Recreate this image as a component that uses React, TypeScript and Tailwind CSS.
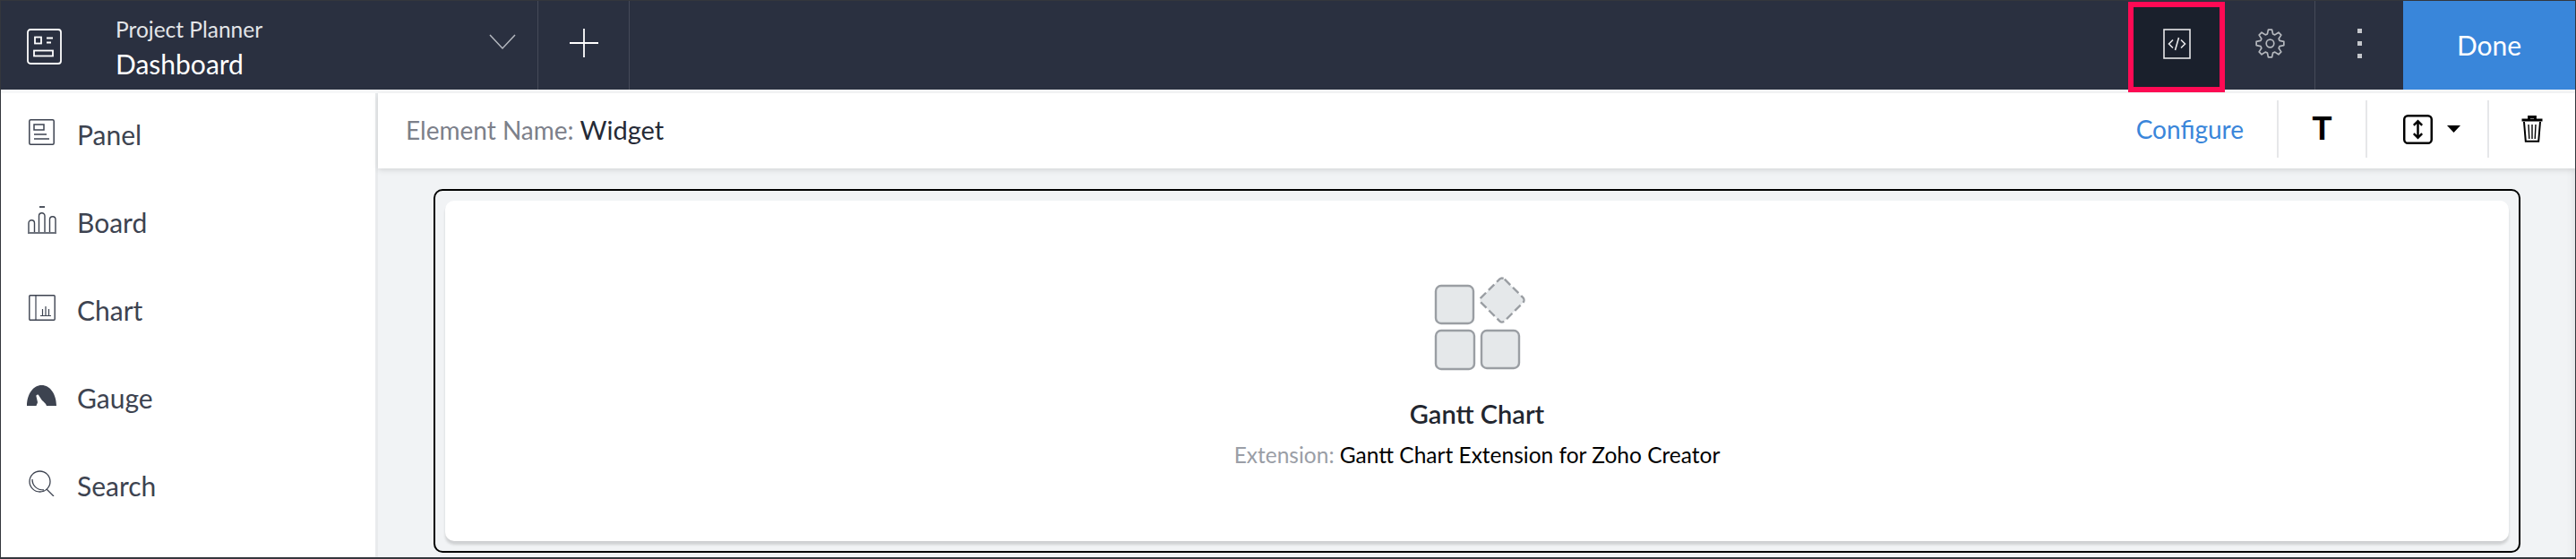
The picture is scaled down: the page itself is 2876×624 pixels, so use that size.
import React from "react";

const font = { fontFamily: '"Lato", "Open Sans", sans-serif' };

function gearPath(cx: number, cy: number, outer: number, inner: number, teeth: number) {
  const pts: string[] = [];
  const step = (Math.PI * 2) / teeth;
  for (let i = 0; i < teeth; i++) {
    const a = i * step - Math.PI / 2;
    const seq: [number, number][] = [
      [inner, a - step * 0.36],
      [outer, a - step * 0.17],
      [outer, a + step * 0.17],
      [inner, a + step * 0.36],
    ];
    seq.forEach(([r, t]) => pts.push(`${(cx + r * Math.cos(t)).toFixed(2)} ${(cy + r * Math.sin(t)).toFixed(2)}`));
  }
  return "M" + pts.join("L") + "Z";
}

function Gear() {
  return (
    <svg width="33" height="33" viewBox="0 0 33 33" fill="none" stroke="#b4b7bd" strokeWidth="1.7" strokeLinejoin="round">
      <circle cx="16.5" cy="16.5" r="4.3" />
      <path d={gearPath(16.5, 16.5, 15.5, 11, 8)} />
    </svg>
  );
}

const items: [string, React.ReactNode][] = [
  ["Panel", (
    <svg width="29" height="29" viewBox="0 0 29 29" fill="none" stroke="#3d4350" strokeWidth="1.5">
      <rect x="0.8" y="0.8" width="27.400" height="27.400" rx="1.500" />
      <rect x="6" y="6" width="11" height="6" />
      <path d="M6 17h14M6 22h17" />
    </svg>
  )],
  ["Board", (
    <svg width="32" height="31" viewBox="0 0 32 31" fill="none" stroke="#3d4350" strokeWidth="1.4">
      <path d="M13 1h6" strokeWidth="1.800" />
      <path d="M1 29V19a3 3 0 0 1 6.500 0v10M12.500 29V11a3.200 3.200 0 0 1 6.500 0v18M24.500 29V15a3.200 3.200 0 0 1 6.500 0v14M0 30h32" />
    </svg>
  )],
  ["Chart", (
    <svg width="30" height="29" viewBox="0 0 30 29" fill="none" stroke="#3d4350" strokeWidth="1.400">
      <rect x="0.800" y="0.800" width="28.400" height="27.400" rx="1" />
      <path d="M8 1v27M13 23.500h12M15.500 23v-7M19 23v-10M22.500 23v-7" strokeWidth="1.200" />
    </svg>
  )],
  ["Gauge", (
    <svg width="33" height="23" viewBox="0 0 33 23" fill="#3d4350">
      <path d="M0 23C0 10 7 0 16.500 0S33 10 33 23H22c-1-3-3-4-5-6l-4-6c-1-1-3 0-2.500 1.500L12 19c0 1-1 2-1.500 4z" />
    </svg>
  )],
  ["Search", (
    <svg width="29" height="29" viewBox="0 0 29 29" fill="none" stroke="#3d4350" strokeWidth="1.300">
      <circle cx="12.500" cy="12.500" r="11.500" />
      <path d="M4 10c0 7 5 12 13 12M20 21l8 8" />
    </svg>
  )],
];

export default function App() {
  return (
    <div className="flex h-[624px] w-[2876px] flex-col overflow-hidden border border-b-2 border-[#34373d] bg-white" style={font}>
      <header className="flex h-[99px] shrink-0 items-stretch bg-[#2a3040] text-white">
        <div className="flex w-[600px] items-center border-r border-[#454a58] pl-[29px] pr-[24px]">
          <svg width="39" height="40" viewBox="0 0 39 40" fill="none" stroke="#fff" strokeWidth="1.800" className="mt-[3px] shrink-0">
            <rect x="1" y="1" width="37" height="38" rx="3" />
            <rect x="9" y="9.500" width="7" height="7" />
            <path d="M22 10.500h7M22 15.500h5" />
            <rect x="8" y="24.500" width="21" height="6" />
          </svg>
          <div className="ml-[60px] mt-[5px] flex flex-col">
            <span className="text-[24.500px] leading-[30px] text-[#e3e5e8]">Project Planner</span>
            <span className="mt-[5px] text-[30px] leading-[36px]">Dashboard</span>
          </div>
          <svg width="30" height="18" viewBox="0 0 30 18" fill="none" stroke="#b5b8bf" strokeWidth="1.500" className="ml-auto mt-[-8px]">
            <path d="M1 1l14 15L29 1" />
          </svg>
        </div>
        <div className="flex w-[102px] items-center justify-center border-r border-[#454a58]">
          <svg width="32" height="32" viewBox="0 0 32 32" stroke="#fff" strokeWidth="1.800" className="mt-[-6px]">
            <path d="M16 0v32M0 16h32" />
          </svg>
        </div>
        <div className="ml-auto flex items-stretch">
          <div className="z-10 mt-[1px] flex h-[101px] w-[108px] items-center justify-center self-start border-[6px] border-[#ff0a54] bg-[#1a202c] pb-[7px]">
            <svg width="31" height="34" viewBox="0 0 31 34" fill="none" stroke="#e6e7e9" strokeWidth="1.600">
              <rect x="1" y="1" width="29" height="32" />
              <path d="M11 12.500l-4.500 4.500 4.500 4.500M20 12.500l4.500 4.500-4.500 4.500M17.500 10l-4 14" />
            </svg>
          </div>
          <div className="flex w-[101px] items-center justify-center border-r border-[#454a58] pb-[5px]">
            <Gear />
          </div>
          <div className="flex w-[98px] flex-col items-center justify-center gap-[9px] pb-[5px]">
            <span className="h-[5px] w-[5px] bg-[#c4c6cb]" />
            <span className="h-[5px] w-[5px] bg-[#c4c6cb]" />
            <span className="h-[5px] w-[5px] bg-[#c4c6cb]" />
          </div>
          <div className="flex w-[192px] items-center justify-center bg-[#3986da] text-[30px]">Done</div>
        </div>
      </header>
      <div className="h-[4px] shrink-0 bg-[#f6f7f8]" />
      <div className="flex min-h-0 flex-1">
        <aside className="flex w-[421px] shrink-0 flex-col border-r-[3px] border-[#e9ebed] pl-[29px]">
          {items.map(([label, icon]) => (
            <div key={label} className="flex h-[98px] shrink-0 items-center pb-[5px] text-[30px] text-[#3d4350]">
              <span className="mb-[6px] flex w-[33px] justify-center">{icon}</span>
              <span className="ml-[23px]">{label}</span>
            </div>
          ))}
        </aside>
        <main className="flex min-w-0 flex-1 flex-col bg-[#f1f3f5]">
          <div className="z-10 flex h-[84px] shrink-0 items-center bg-white pb-[3px] pl-[31px] shadow-[0_2px_6px_rgba(0,0,0,0.12)]">
            <span className="text-[28px] text-[#7c808a]">Element Name:</span>
            <span className="ml-[7px] text-[29px] text-[#252a36]">Widget</span>
            <div className="mb-[1px] ml-auto flex h-[64px] items-center">
              <span className="mr-[37px] text-[28px] text-[#3a86da]">Configure</span>
              <div className="flex h-[64px] w-[99px] items-center justify-center border-l-2 border-[#e6e7e9]">
                <span className="text-[36px] font-bold leading-none text-black" style={{ fontFamily: '"Liberation Sans", sans-serif' }}>T</span>
              </div>
              <div className="flex h-[64px] w-[136px] items-center justify-center gap-[16px] border-l-2 border-[#e6e7e9] pl-[10px]">
                <svg width="33" height="33" viewBox="0 0 32 32" fill="none" stroke="#000" strokeWidth="2.400">
                  <rect x="1.200" y="1.200" width="29.600" height="29.600" rx="4" />
                  <path d="M16 7v18M11.500 11.500L16 7l4.500 4.500M11.500 20.500L16 25l4.500-4.500" />
                </svg>
                <svg width="15" height="8" viewBox="0 0 15 8" fill="#000"><path d="M0 0h15L7.500 8z" /></svg>
              </div>
              <div className="flex h-[64px] w-[98px] items-center justify-center border-l-2 border-[#e6e7e9]">
                <svg width="24" height="30" viewBox="0 0 24 30" fill="none" stroke="#000" strokeWidth="1.700">
                  <path d="M0.500 5h23M8.500 3.500V1.500h7v2" strokeWidth="2.800" />
                  <path d="M3 7l1.800 21.800h14.400L21 7" strokeWidth="2" />
                  <path d="M8 10l.8 16M12 10v16M16 10l-.8 16" strokeWidth="1.400" />
                </svg>
              </div>
            </div>
          </div>
          <div className="flex min-h-0 flex-1 pb-[5px] pl-[62px] pr-[61px] pt-[23px] shadow-[inset_-10px_0_8px_-8px_rgba(0,0,0,0.08)]">
            <div className="flex flex-1 rounded-[10px] border-2 border-black p-[11px]">
              <div className="flex flex-1 flex-col items-center rounded-[10px] bg-white pt-[82px] shadow-[0_4px_3px_rgba(0,0,0,0.14)]">
                <svg width="108" height="108" viewBox="0 0 108 108" stroke="#9a9ea3" strokeWidth="2.400" fill="#e5e8ea" className="ml-[10px]">
                  <rect x="3" y="13" width="42" height="42" rx="6" />
                  <rect x="3" y="63" width="43" height="43" rx="6" />
                  <rect x="54" y="63" width="42" height="42" rx="6" />
                  <rect x="58.500" y="10.500" width="37" height="37" rx="4" transform="rotate(45 77 29)" strokeDasharray="9 4" />
                </svg>
                <span className="mt-[31px] text-[29px] font-semibold leading-[34px] text-[#22262f]">Gantt Chart</span>
                <div className="mt-[14px] text-[24.500px] leading-[30px]">
                  <span className="text-[#9a9ea6]">Extension: </span>
                  <span className="text-black">Gantt Chart Extension for Zoho Creator</span>
                </div>
              </div>
            </div>
          </div>
        </main>
      </div>
    </div>
  );
}
